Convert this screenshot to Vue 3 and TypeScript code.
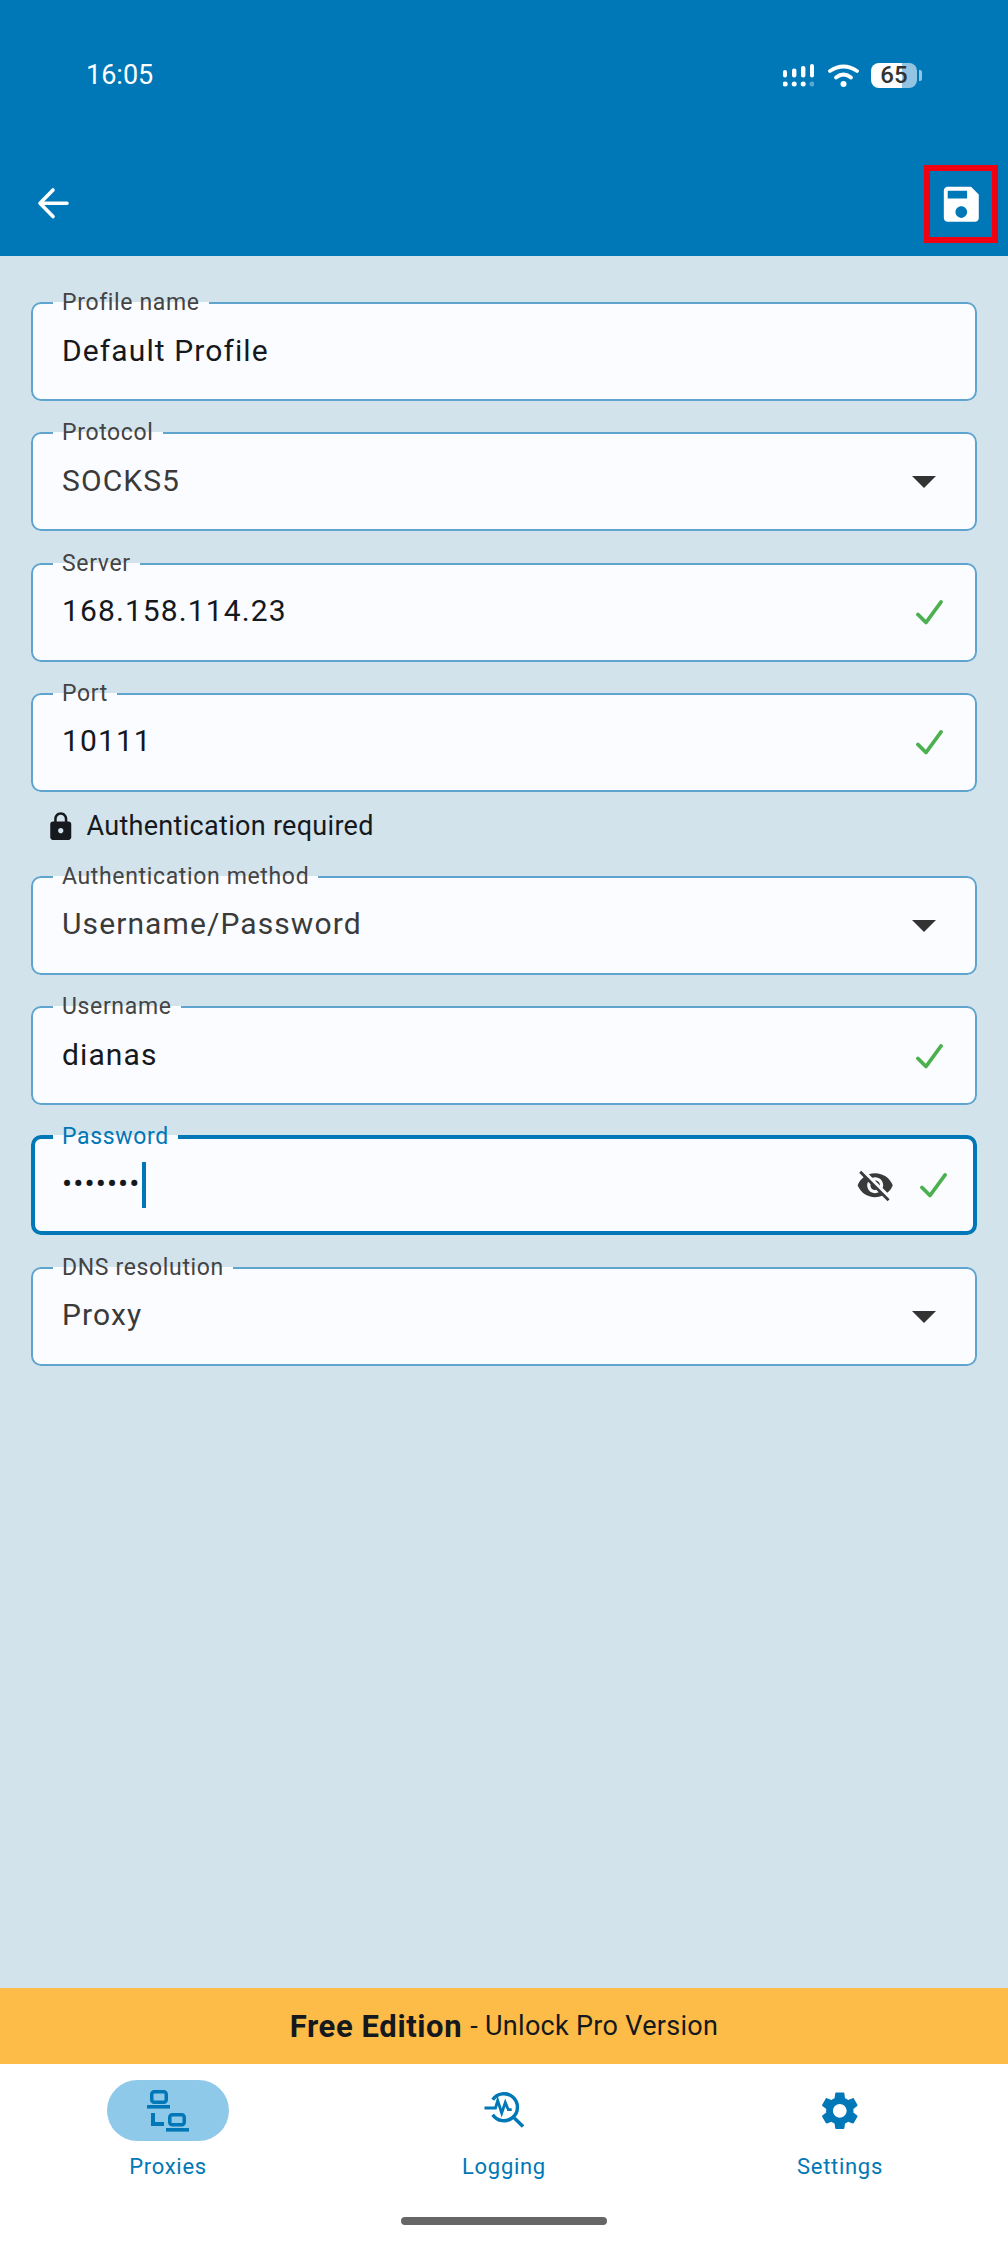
<script setup lang="ts">
type Field = {
  label: string;
  value: string;
  kind: "text" | "select" | "password";
  valid?: boolean;
};

const fields: Field[] = [
  { label: "Profile name", value: "Default Profile", kind: "text" },
  { label: "Protocol", value: "SOCKS5", kind: "select" },
  { label: "Server", value: "168.158.114.23", kind: "text", valid: true },
  { label: "Port", value: "10111", kind: "text", valid: true },
  { label: "Authentication method", value: "Username/Password", kind: "select" },
  { label: "Username", value: "dianas", kind: "text", valid: true },
  { label: "Password", value: "•••••••", kind: "password", valid: true },
  { label: "DNS resolution", value: "Proxy", kind: "select" },
];
</script>

<template>
  <div class="page">
    <header class="top">
      <div class="status">
        <span class="time">16:05</span>
        <div class="status__icons">
          <svg class="signal" width="31" height="23" viewBox="0 0 31 23">
            <rect x="0" y="6" width="4" height="7.5" rx="2" fill="#fff" />
            <rect x="9" y="4.5" width="4.4" height="9" rx="2" fill="#fff" />
            <rect x="18" y="2" width="4.4" height="11.5" rx="2" fill="#fff" />
            <rect x="27" y="0" width="4" height="13.5" rx="2" fill="#fff" />
            <circle cx="2.2" cy="20" r="2.5" fill="#fff" />
            <circle cx="11.2" cy="20" r="2.5" fill="#fff" />
            <circle cx="20.2" cy="20" r="2.5" fill="#fff" />
            <circle cx="29" cy="20" r="2.5" fill="#5da8d3" />
          </svg>
          <svg class="wifi" width="31" height="23" viewBox="0 0 31 23" fill="none" stroke="#fff" stroke-width="3.8" stroke-linecap="round">
            <path d="M2 7 Q15.5 -2 29 7" />
            <path d="M8 13.5 Q15.5 7.5 23 13.5" />
            <circle cx="15.5" cy="20" r="3" fill="#fff" stroke="none" />
          </svg>
          <div class="battery">65</div>
          <div class="battery__nub"></div>
        </div>
      </div>
      <div class="toolbar">
        <svg class="back" width="46.6" height="46.6" viewBox="0 0 46.6 46.6" fill="none" stroke="#fff" stroke-width="3.6" stroke-linecap="round" stroke-linejoin="round">
          <path d="M37 23.3 H10 M23 10 L10 23.3 L23 36.6" />
        </svg>
        <div class="save">
          <svg width="46.6" height="46.6" viewBox="0 0 24 24" fill="#fff">
            <path d="M17 3H5c-1.11 0-2 .9-2 2v14c0 1.1.89 2 2 2h14c1.1 0 2-.9 2-2V7l-4-4zm-5 16c-1.66 0-3-1.34-3-3s1.34-3 3-3 3 1.34 3 3-1.34 3-3 3zm3-10H5V5h10v4z" />
          </svg>
        </div>
      </div>
    </header>

    <main class="form">
      <template v-for="f in fields" :key="f.label">
        <fieldset class="field" :class="{ 'field--focus': f.kind === 'password' }">
          <legend class="field__label">{{ f.label }}</legend>
          <div class="field__row">
            <span class="field__value" :class="{ 'field__value--select': f.kind === 'select' }">{{ f.value }}</span>
            <span v-if="f.kind === 'password'" class="caret"></span>
            <svg v-if="f.kind === 'password'" class="eye" width="38.4" height="38.4" viewBox="0 0 24 24" fill="#3a3a3a">
              <path d="M12 7c2.76 0 5 2.24 5 5 0 .65-.13 1.26-.36 1.83l2.92 2.92c1.51-1.26 2.7-2.89 3.43-4.75-1.73-4.39-6-7.5-11-7.5-1.4 0-2.74.25-3.98.7l2.16 2.16C10.74 7.13 11.35 7 12 7zM2 4.27l2.28 2.28.46.46C3.08 8.3 1.78 10.02 1 12c1.73 4.39 6 7.5 11 7.5 1.55 0 3.03-.3 4.38-.84l.42.42L19.73 22 21 20.73 3.27 3 2 4.27zM7.53 9.8l1.55 1.55c-.05.21-.08.43-.08.65 0 1.66 1.34 3 3 3 .22 0 .44-.03.65-.08l1.55 1.55c-.67.33-1.41.53-2.2.53-2.76 0-5-2.24-5-5 0-.79.2-1.53.53-2.2zm4.31-.78l3.15 3.15.02-.16c0-1.66-1.34-3-3-3l-.17.01z" />
            </svg>
            <svg v-if="f.valid" class="check" width="27" height="25" viewBox="0 0 27 25" fill="none" stroke="#4caf50" stroke-width="3.8" stroke-linecap="round" stroke-linejoin="round">
              <path d="M2 14.5 L10 22.5 L25 2" />
            </svg>
            <span v-if="f.kind === 'select'" class="arrow"></span>
          </div>
        </fieldset>
        <div v-if="f.label === 'Port'" class="auth">
          <svg width="31.5" height="31.5" viewBox="0 0 24 24" fill="#16191d">
            <path d="M18 8h-1V6c0-2.76-2.24-5-5-5S7 3.24 7 6v2H6c-1.1 0-2 .9-2 2v10c0 1.1.9 2 2 2h12c1.1 0 2-.9 2-2V10c0-1.1-.9-2-2-2zm-6 9c-1.1 0-2-.9-2-2s.9-2 2-2 2 .9 2 2-.9 2-2 2zm3.1-9H8.9V6c0-1.71 1.39-3.1 3.1-3.1 1.71 0 3.1 1.39 3.1 3.1v2z" />
          </svg>
          <span>Authentication required</span>
        </div>
      </template>
    </main>

    <div class="banner"><b>Free Edition</b> - Unlock Pro Version</div>

    <nav class="nav">
      <div class="nav__items">
        <div class="nav__item">
          <div class="nav__pill nav__pill--on">
            <svg width="42" height="42" viewBox="0 0 42 42" fill="none" stroke="#0077b6" stroke-width="3.5">
              <rect x="4.75" y="1.75" width="14.5" height="10.5" rx="2.5" />
              <rect x="0" y="15" width="23" height="3.6" fill="#0077b6" stroke="none" />
              <rect x="22.75" y="24.75" width="14.5" height="10" rx="2.5" />
              <rect x="19" y="38" width="23" height="3.6" fill="#0077b6" stroke="none" />
              <path d="M6 23 V34 H17" stroke-width="4" />
            </svg>
          </div>
          <span>Proxies</span>
        </div>
        <div class="nav__item">
          <div class="nav__pill">
            <svg width="40" height="37" viewBox="0 0 40 37" fill="none" stroke="#0077b6" stroke-width="3.4">
              <path d="M8.7 7.7 A13.5 13.5 0 1 1 8.7 22.7" />
              <path d="M30.3 26 L39 34.5" />
              <path d="M0.5 16 H11.5 L13.7 8.5 L17.7 21 L21.3 10.5 L24.3 17.7 H27.7" stroke-width="2.8" />
            </svg>
          </div>
          <span>Logging</span>
        </div>
        <div class="nav__item">
          <div class="nav__pill">
            <svg width="45.6" height="45.6" viewBox="0 0 24 24" fill="#0077b6">
              <path d="M19.14 12.94c.04-.3.06-.61.06-.94 0-.32-.02-.64-.07-.94l2.03-1.58c.18-.14.23-.41.12-.61l-1.92-3.32c-.12-.22-.37-.29-.59-.22l-2.39.96c-.5-.38-1.03-.7-1.62-.94l-.36-2.54c-.04-.24-.24-.41-.48-.41h-3.84c-.24 0-.43.17-.47.41l-.36 2.54c-.59.24-1.13.57-1.62.94l-2.39-.96c-.22-.08-.47 0-.59.22L2.74 8.87c-.12.21-.08.47.12.61l2.03 1.58c-.05.3-.09.63-.09.94s.02.64.07.94l-2.03 1.58c-.18.14-.23.41-.12.61l1.92 3.32c.12.22.37.29.59.22l2.39-.96c.5.38 1.03.7 1.62.94l.36 2.54c.05.24.24.41.48.41h3.84c.24 0 .44-.17.47-.41l.36-2.54c.59-.24 1.13-.56 1.62-.94l2.39.96c.22.08.47 0 .59-.22l1.92-3.32c.12-.22.07-.47-.12-.61l-2.01-1.58zM12 15.6c-1.98 0-3.6-1.62-3.6-3.6s1.62-3.6 3.6-3.6 3.6 1.62 3.6 3.6-1.62 3.6-3.6 3.6z" />
            </svg>
          </div>
          <span>Settings</span>
        </div>
      </div>
      <div class="nav__handle"></div>
    </nav>
  </div>
</template>

<style scoped>
.page {
  width: 1008px;
  height: 2244px;
  display: flex;
  flex-direction: column;
  background: #d2e3ec;
  font-family: Roboto, "Liberation Sans", sans-serif;
}

.top {
  height: 256px;
  background: #0077b6;
  color: #fff;
}

.status {
  height: 150px;
  padding: 0 86px;
  display: flex;
  align-items: center;
  justify-content: space-between;
  box-sizing: border-box;
}

.time {
  font-size: 27px;
}

.status__icons {
  display: flex;
  align-items: center;
}

.wifi {
  margin-left: 14px;
}

.battery {
  margin-left: 12px;
  width: 46px;
  height: 25px;
  border-radius: 8px;
  background: linear-gradient(90deg, #fff 31px, #93c5e2 31px);
  color: #333;
  font-size: 24px;
  font-weight: 500;
  line-height: 25px;
  text-align: center;
}

.battery__nub {
  margin-left: 2px;
  width: 3px;
  height: 11px;
  border-radius: 0 2px 2px 0;
  background: #93c5e2;
}

.toolbar {
  height: 106px;
  padding: 0 10px 0 30px;
  display: flex;
  align-items: center;
  justify-content: space-between;
}

.save {
  width: 74px;
  height: 78px;
  margin-top: 2px;
  box-sizing: border-box;
  border: 6px solid #f00010;
  display: flex;
  align-items: center;
  justify-content: center;
}

.form {
  flex: 1;
  padding: 35px 31px 0;
  display: flex;
  flex-direction: column;
  gap: 20.3px;
}

.field {
  margin: 0;
  padding: 0;
  height: 110px;
  box-sizing: border-box;
  flex: none;
  border: 2px solid #5ea4ce;
  border-radius: 10px;
  background: #fafcff;
}

.field__label {
  margin-left: 20px;
  padding: 0 9px;
  font-size: 23px;
  line-height: 24px;
  letter-spacing: 0.65px;
  color: #444;
}

.field__row {
  height: 84px;
  padding: 0 32px 10px 29px;
  box-sizing: border-box;
  display: flex;
  align-items: center;
}

.field__value {
  font-size: 30px;
  letter-spacing: 1.1px;
  color: #15181c;
  padding-bottom: 4px;
}

.field__value--select {
  color: #3a3a3a;
}

.check {
  margin-left: auto;
}

.arrow {
  margin-left: auto;
  margin-right: 7px;
  border-left: 12px solid transparent;
  border-right: 12px solid transparent;
  border-top: 12px solid #333;
}

.field--focus {
  border: 4px solid #0077b6;
}

.field--focus .field__label {
  margin-left: 18px;
  color: #0077b6;
}

.field--focus .field__row {
  height: 82px;
  padding: 0 26px 10px 27px;
}

.caret {
  margin-left: 1px;
  width: 4px;
  height: 46px;
  background: #0077b6;
}

.eye {
  margin-left: auto;
}

.field--focus .check {
  margin-left: 26px;
}

.auth {
  height: 32.4px;
  padding: 0 0 4px 14px;
  box-sizing: border-box;
  flex: none;
  display: flex;
  align-items: center;
  gap: 10px;
  font-size: 27px;
  letter-spacing: 0.3px;
  color: #15181c;
}

.banner {
  height: 76px;
  background: #fdbc47;
  display: flex;
  align-items: center;
  justify-content: center;
  gap: 0.3em;
  font-size: 27px;
  letter-spacing: 0.3px;
  color: #15181c;
}

.banner b {
  font-size: 31px;
  font-weight: 700;
  letter-spacing: 0.6px;
}

.nav {
  height: 180px;
  background: #fff;
  padding-top: 16px;
  box-sizing: border-box;
}

.nav__items {
  display: grid;
  grid-template-columns: repeat(3, 1fr);
}

.nav__item {
  display: flex;
  flex-direction: column;
  align-items: center;
  gap: 12px;
  font-size: 22px;
  line-height: 28px;
  letter-spacing: 0.7px;
  color: #0077b6;
}

.nav__pill {
  width: 122px;
  height: 61px;
  border-radius: 31px;
  display: flex;
  align-items: center;
  justify-content: center;
}

.nav__pill--on {
  background: #8fc9ea;
}

.nav__handle {
  width: 206px;
  height: 8px;
  margin: 36px auto 0;
  border-radius: 4px;
  background: #666;
}
</style>

<style>
body {
  margin: 0;
}
</style>
